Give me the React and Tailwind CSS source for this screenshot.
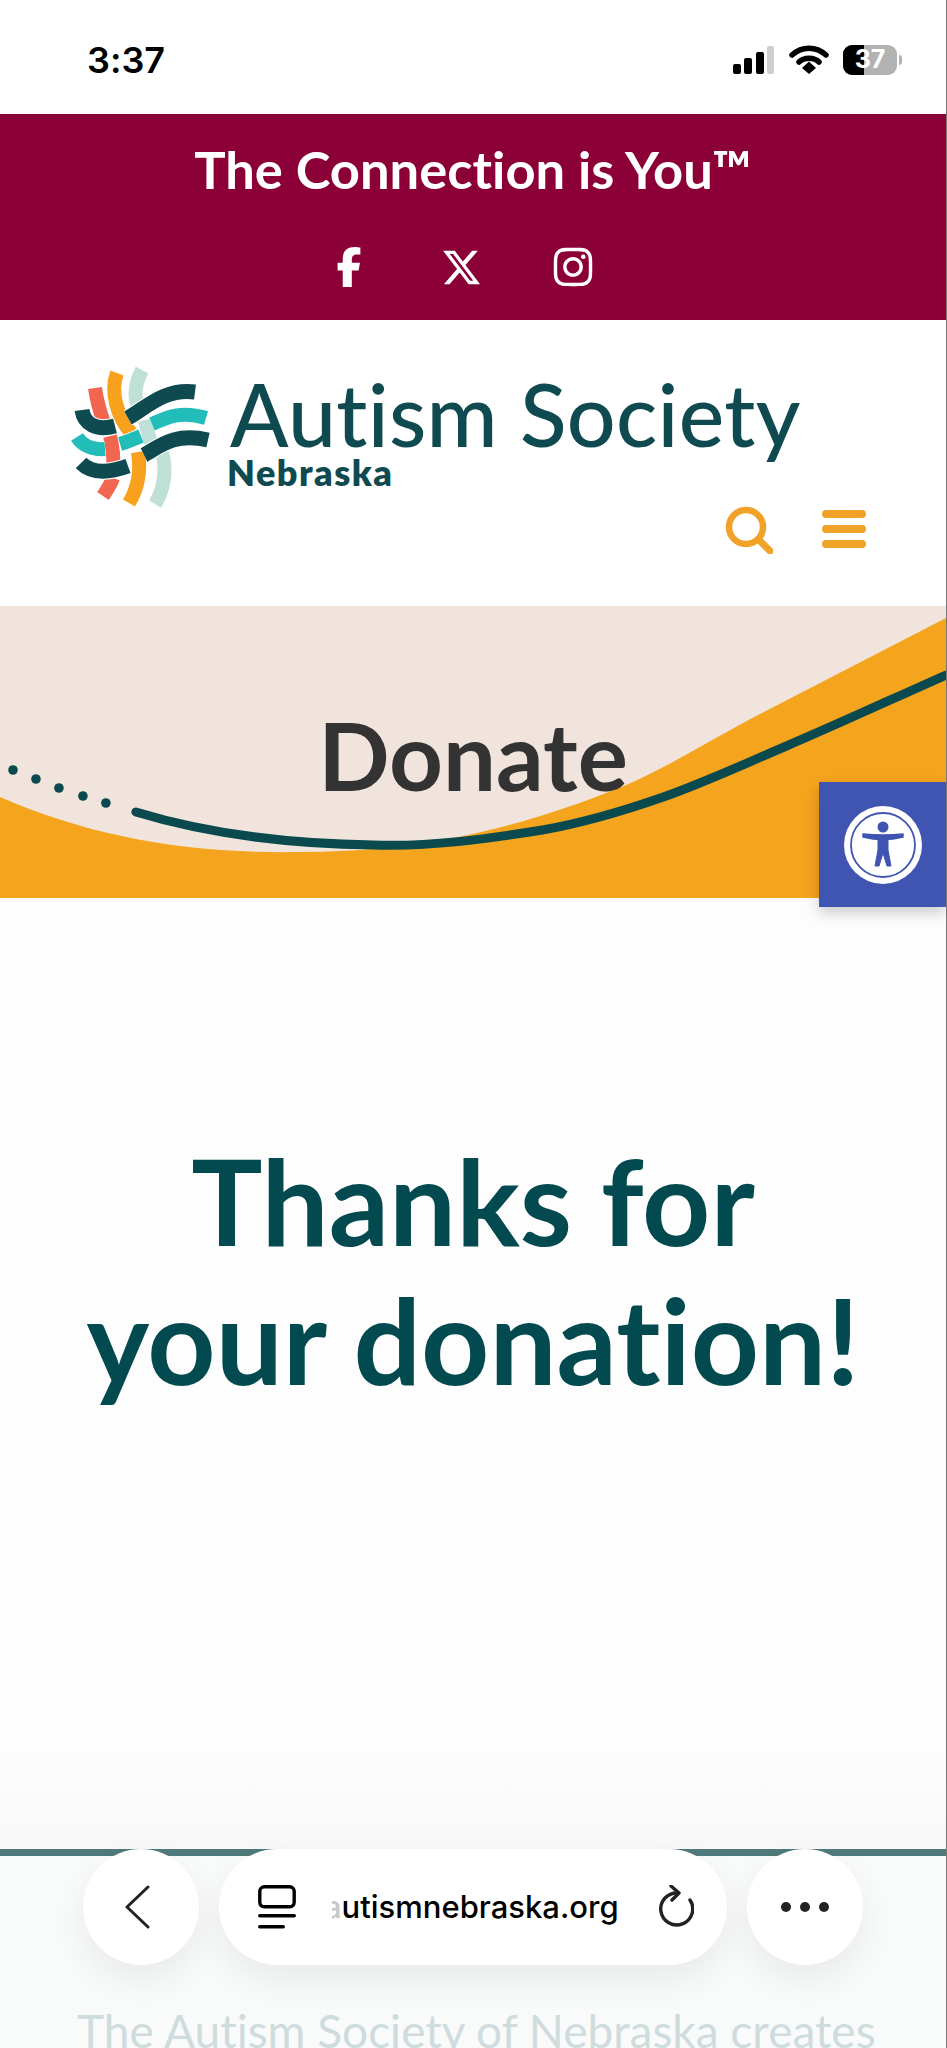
import { FaFacebookF, FaXTwitter, FaInstagram } from "react-icons/fa6";

function StatusIcons() {
  return (
    <div className="flex items-center gap-[14px]">
      <svg width="42" height="28" viewBox="0 0 42 28" className="text-black">
        <rect x="0" y="18" width="8" height="10" rx="2" fill="currentColor" />
        <rect x="11" y="12" width="8" height="16" rx="2" fill="currentColor" />
        <rect x="23" y="6" width="8" height="22" rx="2" fill="currentColor" />
        <rect x="34" y="0" width="7" height="28" rx="2" fill="#cfcfcf" />
      </svg>
      <svg width="40" height="29" viewBox="0 0 40 29">
        <path d="M3 10 C13 1 27 1 37 10" fill="none" stroke="#000" strokeWidth="5.5" strokeLinecap="round" />
        <path d="M10 17 C15 12 25 12 30 17" fill="none" stroke="#000" strokeWidth="5.5" strokeLinecap="round" />
        <path d="M13 23 L20 16.5 L27 23 L20 29 Z" fill="#000" />
      </svg>
      <div className="flex items-center">
        <div className="relative flex h-[30px] w-[54px] items-center justify-center overflow-hidden rounded-[9px] bg-[#b2b2b2]">
          <div className="absolute inset-y-0 left-0 w-[21px] bg-black" />
          <span className="relative font-['Inter',sans-serif] text-[25px] font-bold leading-none text-white">37</span>
        </div>
        <div className="ml-[2px] h-[10px] w-[3px] rounded-r-sm bg-[#b2b2b2]" />
      </div>
    </div>
  );
}

function LogoMark() {
  const segs = [
    ["M35 28 C37 42 40 52 44 63", "#f2654f", 14],
    ["M50 76 C53 88 54 98 53 108", "#f2654f", 14],
    ["M53 118 C51 124 47 130 43 136", "#f2654f", 14],
    ["M57 13 C50 32 57 56 71 73", "#f8a11c", 14],
    ["M78 92 C81 110 78 128 69 143", "#f8a11c", 14],
    ["M82 10 C74 26 74 40 80 50", "#bfe0d6", 14],
    ["M85 60 C87 68 88 74 91 82", "#bfe0d6", 14],
    ["M102 92 C107 110 104 130 95 144", "#bfe0d6", 14],
    ["M22 50 C24 64 36 71 55 66", "#0f4a50", 15],
    ["M68 58 C86 48 104 28 135 32", "#0f4a50", 15],
    ["M92 64 C106 58 120 50 146 58", "#22bdb9", 14],
    ["M60 84 C67 82 74 79 81 76", "#22bdb9", 14],
    ["M17 77 C22 85 32 90 45 89", "#22bdb9", 14],
    ["M84 95 C98 88 112 72 148 80", "#0f4a50", 15],
    ["M21 103 C30 112 46 114 68 106", "#0f4a50", 15],
  ];
  return (
    <svg width="160" height="150" viewBox="0 0 160 150" className="shrink-0">
      {segs.map(([d, c, w], i) => (
        <g key={i}>
          <path d={d} fill="none" stroke="#ffffff" strokeWidth={w + 2} />
          <path d={d} fill="none" stroke={c} strokeWidth={w} />
        </g>
      ))}
    </svg>
  );
}

function BannerArt() {
  return (
    <svg viewBox="0 0 947 292" className="absolute inset-0 h-full w-full" preserveAspectRatio="none">
      <path d="M0 191 C95 232 190 248 302 246 C354 246 407 241 459 231 C513 220 568 203 622 181 C666 163 711 134 755 111 C819 78 883 45 947 12 L947 292 L0 292 Z" fill="#f5a41e" />
      <path d="M136 206 C215 230 295 238 374 239 C430 241 487 233 543 224 C583 217 624 205 664 191 C704 177 745 158 785 141 C839 118 893 93 947 69" fill="none" stroke="#0a4a4e" strokeWidth="9" strokeLinecap="round" />
      {[[13, 164], [36, 173], [59, 182], [83, 190], [106, 197]].map(([x, y]) => (
        <circle key={x} cx={x} cy={y} r="4.8" fill="#0a4a4e" />
      ))}
    </svg>
  );
}

function A11yButton() {
  return (
    <div className="absolute right-0 top-[176px] flex h-[125px] w-[127px] items-center justify-center bg-[#4054b2] shadow-[0_6px_14px_rgba(0,0,0,0.2)]">
      <svg width="78" height="78" viewBox="0 0 78 78">
        <circle cx="39" cy="39" r="39" fill="#fff" />
        <circle cx="39" cy="39" r="32" fill="#fff" stroke="#4054b2" strokeWidth="1.8" />
        <circle cx="39" cy="21" r="5.5" fill="#4054b2" />
        <path d="M19 31 Q39 36 59 31 L59 28 Q39 30 19 28 Z" fill="#4054b2" stroke="#4054b2" strokeWidth="1.5" strokeLinejoin="round" />
        <path d="M34 32 L44 32 L44 44 L47 60 L43 60 L39 47 L35 60 L31 60 L34 44 Z" fill="#4054b2" stroke="#4054b2" strokeWidth="1" strokeLinejoin="round" />
      </svg>
    </div>
  );
}

function BrowserBar() {
  return (
    <div className="absolute left-[83px] top-[1849px] flex h-[116px] w-[780px] gap-[20px] text-[#111]">
      <div className="flex w-[116px] items-center justify-center rounded-full bg-white shadow-[0_14px_36px_rgba(0,0,0,0.07)]">
        <svg width="26" height="44" viewBox="0 0 26 44" className="-ml-[8px]">
          <path d="M24 2 L3 22 L24 42" fill="none" stroke="#222" strokeWidth="3" strokeLinecap="round" strokeLinejoin="round" />
        </svg>
      </div>
      <div className="flex flex-1 items-center rounded-[58px] bg-white pl-[39px] pr-[33px] shadow-[0_14px_36px_rgba(0,0,0,0.07)]">
        <svg width="38" height="44" viewBox="0 0 38 44" className="shrink-0">
          <rect x="1.8" y="1.8" width="34.4" height="20" rx="4.5" fill="none" stroke="#000" strokeWidth="3.4" />
          <rect x="0" y="29" width="38" height="3.6" rx="1.8" fill="#000" />
          <rect x="0" y="40" width="27" height="3.6" rx="1.8" fill="#000" />
        </svg>
        <div className="ml-[36px] flex-1 overflow-hidden">
          <div className="-ml-[8px] font-['Inter',sans-serif] text-[31px] font-medium leading-[40px] text-black">
            <span className="text-[#c8c8c8]">a</span>utismnebraska.org
          </div>
        </div>
        <svg width="38" height="44" viewBox="0 0 38 44" className="shrink-0">
          <path d="M22 8 A16 16 0 1 0 34 15" fill="none" stroke="#222" strokeWidth="3.4" strokeLinecap="round" />
          <path d="M15 1 L23 8 L16 15" fill="none" stroke="#222" strokeWidth="3.4" strokeLinecap="round" strokeLinejoin="round" />
        </svg>
      </div>
      <div className="flex w-[116px] items-center justify-center gap-[9px] rounded-full bg-white shadow-[0_14px_36px_rgba(0,0,0,0.07)]">
        <span className="h-[10px] w-[10px] rounded-full bg-[#222]" />
        <span className="h-[10px] w-[10px] rounded-full bg-[#222]" />
        <span className="h-[10px] w-[10px] rounded-full bg-[#222]" />
      </div>
    </div>
  );
}

export default function App() {
  return (
    <div className="relative flex h-[2048px] w-[947px] flex-col overflow-hidden border-r border-[#777] bg-white font-['Lato',sans-serif] [font-variant-ligatures:none]">
      {/* status bar */}
      <div className="flex h-[114px] shrink-0 items-center justify-between pl-[87px] pr-[44px] pt-[5px]">
        <span className="font-['Inter',sans-serif] text-[36px] font-semibold leading-none text-black">3:37</span>
        <StatusIcons />
      </div>

      {/* tagline */}
      <div className="flex h-[206px] shrink-0 flex-col items-center bg-[#8b0037] pt-[25px] text-white">
        <h2 className="text-[52.5px] font-bold leading-[60px]">The Connection is You™</h2>
        <div className="mt-[46px] flex items-center pr-[24px]">
          <div className="flex w-[112px] justify-center text-[40px]"><FaFacebookF /></div>
          <div className="flex w-[112px] justify-center text-[41px]"><FaXTwitter /></div>
          <div className="flex w-[112px] justify-center text-[44px]"><FaInstagram /></div>
        </div>
      </div>

      {/* logo and nav */}
      <div className="flex h-[286px] shrink-0 flex-col bg-white">
        <div className="flex pl-[60px] pt-[40px]">
          <LogoMark />
          <div className="ml-[10px] pt-[12px] text-[#0f4a50]">
            <div className="text-[86px] font-medium leading-[84px] tracking-[0.3px]">Autism Society</div>
            <div className="ml-[-3px] mt-[-4px] text-[36px] font-extrabold leading-[40px] tracking-[1.5px]">Nebraska</div>
          </div>
        </div>
        <div className="mt-[-6px] flex items-center justify-end gap-[49px] pr-[80px] text-[#f0a229]">
          <svg width="50" height="50" viewBox="0 0 50 50">
            <circle cx="23" cy="23" r="17" fill="none" stroke="currentColor" strokeWidth="6.5" />
            <path d="M36 36 L47 47" stroke="currentColor" strokeWidth="7" strokeLinecap="round" />
          </svg>
          <div className="flex w-[44px] flex-col gap-[7px]">
            <div className="h-[8px] rounded-sm bg-[#f0a229]" />
            <div className="h-[8px] rounded-sm bg-[#f0a229]" />
            <div className="h-[8px] rounded-sm bg-[#f0a229]" />
          </div>
        </div>
      </div>

      {/* page title banner */}
      <div className="relative flex h-[292px] shrink-0 justify-center bg-[#f0e4dc]">
        <BannerArt />
        <h1 className="relative mt-[93px] text-[94px] font-bold leading-[112px] text-[#333333]">Donate</h1>
        <A11yButton />
      </div>

      {/* thanks message */}
      <div className="flex h-[951px] shrink-0 flex-col items-center bg-gradient-to-b from-[#fdfdfd] from-90% to-[#f8f8f8] pt-[233px]">
        <h2 className="text-center text-[119px] font-bold leading-[139px] text-[#024a4f]">
          Thanks for
          <br />
          your donation!
        </h2>
      </div>

      {/* footer peeking under the browser bar */}
      <div className="h-[7px] shrink-0 bg-[#4f7a7b]" />
      <div className="flex-1 bg-[#f9fafa] pl-[77px] pt-[147px]">
        <p className="whitespace-nowrap text-[46px] leading-[56px] text-[#cfdcdd]">The Autism Society of Nebraska creates</p>
      </div>

      <BrowserBar />
    </div>
  );
}
